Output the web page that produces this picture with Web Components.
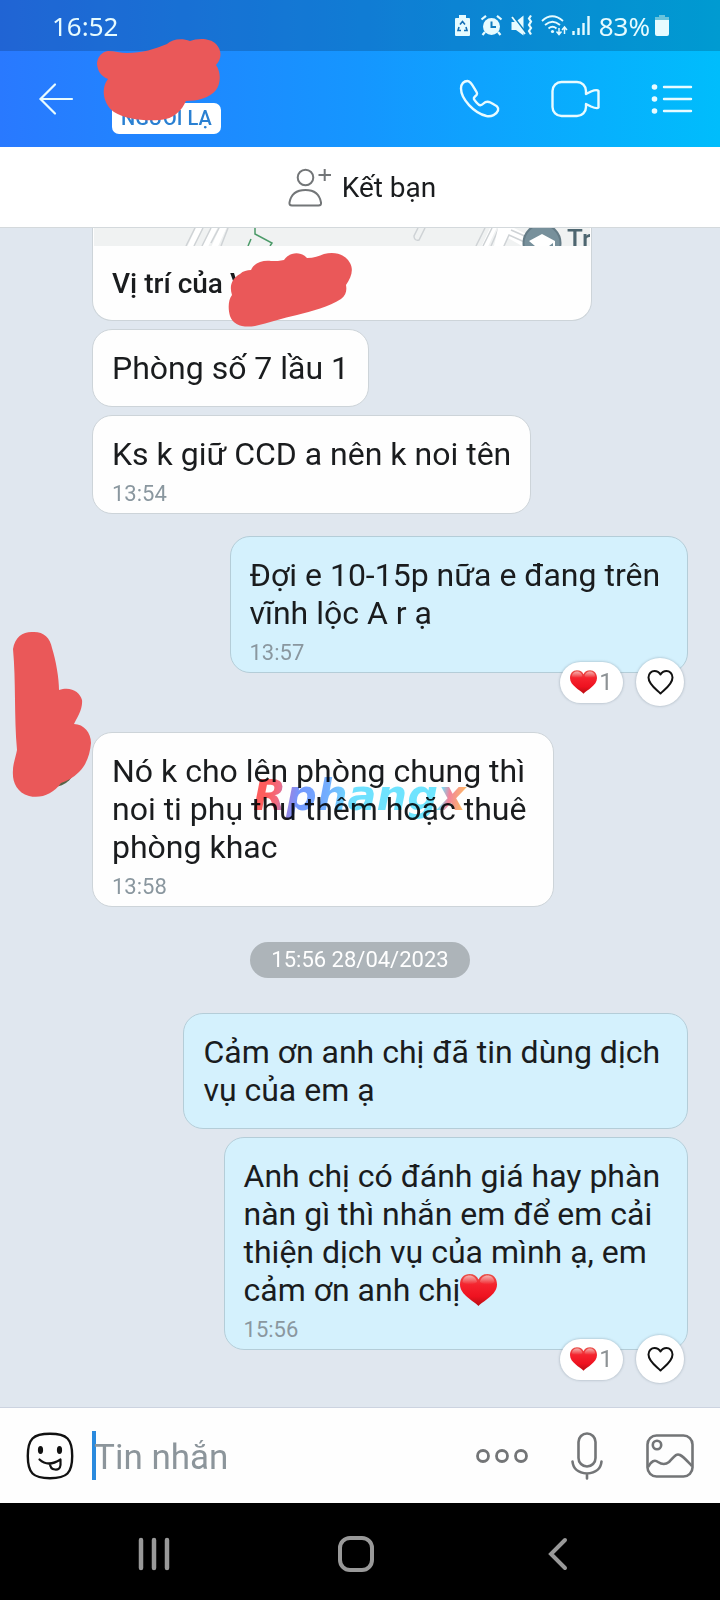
<!DOCTYPE html>
<html lang="vi">
<head>
<meta charset="utf-8">
<meta name="viewport" content="width=device-width, initial-scale=1">
<title>Tin nhắn</title>
<style>
  html, body { margin: 0; }
  body { font-family: Roboto, "Noto Sans", sans-serif; color: #1a1c1e; background: #000; }
</style>
</head>
<body>
<chat-screen></chat-screen>

<script>
const define = (tag, html) => {
  const template = document.createElement('template');
  template.innerHTML = html;
  customElements.define(tag, class extends HTMLElement {
    constructor() {
      super();
      this.attachShadow({ mode: 'open' }).append(template.content.cloneNode(true));
    }
  });
};

/* name: [width, height, markup] */
const ICONS = {
  recycle: [20, 24, '<path fill="currentColor" fill-rule="evenodd" d="M4 1h7v3h3q1 0 1 1v16q0 1-1 1H1q-1 0-1-1V5q0-1 1-1h3z"/><path d="M5 10.500l2.500-3 2.500 3M4 13l-1 3.500h3M11 13l1 3.500H9" fill="none" stroke="#146fb5" stroke-width="1.600"/>'],
  alarm: [25, 24, '<circle cx="11.500" cy="12.500" r="8.500" fill="currentColor"/><path d="M1.500 5.500L6 1.800M21.500 5.500L17 1.800M5 18l-2.500 3M18 18l2.500 3" stroke="currentColor" stroke-width="2.200"/><path d="M11.500 7.500v5.500h4.500" fill="none" stroke="#0e7cc0" stroke-width="2"/>'],
  mute: [26, 24, '<path fill="currentColor" d="M1.500 8h4l8-6.500v20L6 16H1.500z"/><path d="M3 2l13 17" stroke="#0d80bf" stroke-width="2"/><path d="M2 3l13 17" stroke="currentColor" stroke-width="1.800"/><path d="M21 1.500l-2 3 2 3-2 3.500 2 3-2 3 2 3.500" fill="none" stroke="currentColor" stroke-width="2.200"/>'],
  wifi: [26, 24, '<path d="M1 7q10-9.500 21 0M4 11q7.500-6.500 15 0M7.500 14.500q4-3.500 8 0" fill="none" stroke="currentColor" stroke-width="1.800"/><circle cx="11.500" cy="17.500" r="1.600" fill="currentColor"/><path d="M18 14v6M15.500 17.500l2.500 3 2.500-3M23.500 20v-6M21 16l2.500-3 2.500 3" fill="none" stroke="currentColor" stroke-width="1.500"/>'],
  signal: [22, 24, '<path d="M1.500 21v-4M6.500 21v-7M11.500 21v-12M16.500 21V2" stroke="currentColor" stroke-width="2.400"/>'],
  battery: [14, 24, '<path d="M4 1h6v2h4v4H0V3h4z" fill="#69c3dc"/><path d="M0 6h14v14q0 2-2 2H2q-2 0-2-2z" fill="currentColor"/>'],
  back: [36, 34, '<path d="M17 2.500L2.500 17 17 31.500M3 17h31" fill="none" stroke="currentColor" stroke-width="2.200" stroke-linecap="round"/>'],
  phone: [42, 40, '<path d="M2 9.500C2 4.500 5 2 8.500 2c3 0 5 4 7.500 8.500 2.500 4 3 4.500 0 7-2 1.700-1.500 2.500 1.500 6s4.500 3.500 7 1c2-2 4-2.500 7-1 6.500 3.500 8.500 4.500 7.500 8-1.500 4-6.500 6.500-11.500 5.500C15 34 2 20 2 9.500z" fill="none" stroke="currentColor" stroke-width="2.400"/>'],
  video: [50, 38, '<path d="M35 14V11a9 9 0 0 0-9-9H10.500a9 9 0 0 0-9 9v16a9 9 0 0 0 9 9H26a9 9 0 0 0 9-9v-3l5 2.500q6 2.500 7.500 1V11q-1.500-2-7.500.5z" fill="none" stroke="currentColor" stroke-width="2.400" stroke-linejoin="round"/>'],
  list: [42, 34, '<g fill="currentColor"><circle cx="3.500" cy="5" r="2.800"/><circle cx="3.500" cy="17" r="2.800"/><circle cx="3.500" cy="29" r="2.800"/></g><path d="M13 5h27M13 17h27M13 29h27" stroke="currentColor" stroke-width="2.400" stroke-linecap="round"/>'],
  addfriend: [44, 42, '<g fill="none" stroke="#737678" stroke-width="2"><circle cx="17.500" cy="10.500" r="7.800"/><path d="M1.500 35.500C3 27 8.500 23 17.500 23s14 4 15.500 12.500q.5 3-2.500 3H4q-3 0-2.500-3zM30.500 8h12.500M36.700 2v12"/></g>'],
  heart: [27, 26, '<path d="M13.500 24.500C9.500 20.500 1.500 15.500 1.500 8.500 1.500 4.500 4.500 2 7.500 2c3 0 4.500 1 6 3.500C15 3 16.500 2 19.500 2s6 2.500 6 6.500c0 7-8 12-12 16z" fill="none" stroke="currentColor" stroke-width="2" stroke-linejoin="round"/>'],
  emoji: [48, 48, '<path d="M24 1.800C41 1.800 46.200 7 46.200 24S41 46.200 24 46.200 1.800 41 1.800 24 7 1.800 24 1.800z" fill="none" stroke="currentColor" stroke-width="2.400"/><ellipse cx="14.500" cy="18" rx="2.600" ry="4" fill="currentColor"/><ellipse cx="33.500" cy="18" rx="2.600" ry="4" fill="currentColor"/><path d="M13.500 27.500q8.500 8 21 0M24 31.500q0 5.500 5 6 5 .5 5.500-4.500v-5" fill="none" stroke="currentColor" stroke-width="2.200" stroke-linecap="round"/>'],
  more: [52, 14, '<g fill="none" stroke="currentColor" stroke-width="2.800"><circle cx="7" cy="7" r="5.500"/><circle cx="26" cy="7" r="5.500"/><circle cx="45" cy="7" r="5.500"/></g>'],
  mic: [32, 48, '<g fill="none" stroke="currentColor" stroke-width="2.600" stroke-linecap="round"><rect x="7.500" y="1.500" width="17" height="33" rx="8.500"/><path d="M1.500 29.500q1 11 14.500 12 13.500-1 14.500-12M16 42v4.500"/></g>'],
  picture: [48, 46, '<g fill="none" stroke="currentColor" stroke-width="2.600"><rect x="1.500" y="2.500" width="45" height="41" rx="9"/><circle cx="11" cy="12" r="4.200"/><path d="M2 34q5-9 10-5 6 4 11 0c5-5 7-9 11-7 4 2 8 7 12 11"/></g>'],
  recents: [32, 34, '<path d="M3 3v28M16 3v28M29 3v28" stroke="currentColor" stroke-width="4.500" stroke-linecap="round"/>'],
  home: [36, 36, '<rect x="2" y="2" width="32" height="32" rx="10" fill="none" stroke="currentColor" stroke-width="4"/>'],
  prev: [20, 34, '<path d="M17 3L3 17l14 14" fill="none" stroke="currentColor" stroke-width="4" stroke-linecap="round"/>']
};
customElements.define('ui-icon', class extends HTMLElement {
  connectedCallback() {
    const [w, h, body] = ICONS[this.getAttribute('name')];
    if (!this.shadowRoot) this.attachShadow({ mode: 'open' });
    this.shadowRoot.innerHTML = `<style>:host{display:inline-flex;flex:none}svg{display:block;overflow:visible}</style>
      <svg width="${w}" height="${h}" viewBox="0 0 ${w} ${h}" aria-hidden="true">${body}</svg>`;
  }
});

define('red-heart', `
  <style>
    :host { display: inline-block; width: 27px; height: 24px; white-space: normal; }
    svg { display: block; width: 100%; height: 100%; }
  </style>
  <svg viewBox="0 0 37 32" role="img" aria-label="❤">
    <defs>
      <linearGradient id="g" x2="0" y2="1"><stop offset="0" stop-color="#e8544d"/><stop offset=".35" stop-color="#f5222d"/><stop offset=".7" stop-color="#ee1220"/><stop offset="1" stop-color="#b80d12"/></linearGradient>
      <linearGradient id="s" x2="0" y2="1"><stop offset="0" stop-color="#fff" stop-opacity=".55"/><stop offset="1" stop-color="#fff" stop-opacity="0"/></linearGradient>
    </defs>
    <path fill="url(#g)" d="M18.500 32C14 27 0 21 0 10.500 0 4 4 0 9.500 0c4.500 0 7.500 2 9 5.500C20 2 23 0 27.500 0 33 0 37 4 37 10.500 37 21 23 27 18.500 32z"/>
    <path fill="url(#s)" d="M2.500 8C3 3.500 6 1.500 9.500 1.500s7 2.500 7.500 6.500C13 11 6 11 2.500 8zM20 8c.5-4 4-6.500 7.500-6.500S34 3.500 34.500 8c-3.500 3-10.500 3-14.500 0z"/>
  </svg>`);

const SCRIBBLES = {
  name: [126, 82, 'M11 12C18 12 23 14 30 14 45 14 58 10 70 5 75 0 85-1 93 2 101-1 113-1 119 5 125 11 125 20 119 26 124 33 124 44 119 51 113 59 100 62 89 62 85 71 77 80 63 81 45 82 28 80 17 73 7 66 3 50 11 40 3 37 0 30 0 24 1 17 5 13 11 12z'],
  place: [124, 74, 'M22 17C25 10 33 7 42 8c5 0 9 0 13-1 5-8 17-9 23-2 7 0 12-2 17-4 12-3 22 1 26 9 4 7 1 15-4 22 1 6 0 10-5 14-12 8-29 12-44 16-14 3-29 8-42 11-12 2-22-1-25-10-2-7-2-16 2-21-3-9 0-17 8-21 3-3 7-4 11-4z'],
  avatar: [80, 168, 'M1 18C3 5 12 0 22 1c10 0 16 6 18 16 4 13 7 30 7 42 12-4 21 2 23 10 1 9-5 18-8 24 10 0 17 9 17 19-1 11-4 21-12 29-6 6-12 9-18 11-8 11-20 16-32 13C4 161 0 150 1 139c0-6 3-14 4-20C2 85 4 50 1 18z']
};
customElements.define('red-scribble', class extends HTMLElement {
  connectedCallback() {
    const [w, h, d] = SCRIBBLES[this.getAttribute('shape')];
    if (!this.shadowRoot) this.attachShadow({ mode: 'open' });
    this.shadowRoot.innerHTML = `<style>:host{display:block;pointer-events:none}svg{display:block;overflow:visible}</style>
      <svg width="${w}" height="${h}" viewBox="0 0 ${w} ${h}" aria-hidden="true"><path fill="#ea5859" d="${d}"/></svg>`;
  }
});

define('status-bar', `
  <style>
    :host { display: flex; align-items: center; gap: 5px; height: 51px; padding: 0 51px 0 52px;
      background: rgba(0,20,40,.2); color: #e6fbff; font: 26px/30px "Noto Sans", sans-serif; }
    .time { flex: 1; }
  </style>
  <span class="time">16:52</span>
  <ui-icon name="recycle"></ui-icon><ui-icon name="alarm"></ui-icon><ui-icon name="mute"></ui-icon>
  <ui-icon name="wifi"></ui-icon><ui-icon name="signal"></ui-icon>
  <span>83%</span>
  <ui-icon name="battery"></ui-icon>`);

define('chat-header', `
  <style>
    :host { display: flex; align-items: stretch; height: 96px; position: relative; color: #e8fbff; }
    button { display: flex; align-items: center; justify-content: center; width: 96px; padding: 0; border: 0; background: none; color: inherit; }
    .back { width: 112px; }
    .title { flex: 1; display: flex; align-items: flex-end; padding-bottom: 13px; }
    .badge { padding: 0 9px; border-radius: 7px; background: #fff; color: #2a80d2; font-size: 20px; line-height: 31px; font-weight: 500; }
    red-scribble { position: absolute; left: 97px; top: -12px; }
  </style>
  <button class="back" aria-label="Quay lại"><ui-icon name="back"></ui-icon></button>
  <div class="title"><span class="badge">NGƯỜI LẠ</span></div>
  <button aria-label="Gọi thoại"><ui-icon name="phone"></ui-icon></button>
  <button aria-label="Gọi video"><ui-icon name="video"></ui-icon></button>
  <button aria-label="Tùy chọn"><ui-icon name="list"></ui-icon></button>
  <red-scribble shape="name"></red-scribble>`);

define('friend-bar', `
  <style>
    :host { display: block; background: #fff; border-bottom: 1px solid #d4d9dc; }
    button { display: flex; align-items: center; justify-content: center; gap: 10px; box-sizing: border-box; width: 100%; height: 80px;
      padding: 1px 0 0 4px; border: 0; background: none; color: #1a1c1e; font: 28px/36px Roboto, sans-serif; }
  </style>
  <button><ui-icon name="addfriend"></ui-icon>Kết bạn</button>`);

define('location-card', `
  <style>
    :host { display: block; position: relative; width: 500px; max-width: 100%; box-sizing: border-box; background: #fefefe;
      border: solid #cdd4d9; border-width: 0 1px 1px; border-radius: 0 0 20px 20px; }
    .map { display: flex; height: 18px; margin: 0 1px; overflow: hidden; background: #f0f2f2; }
    .map svg { display: block; flex: none; }
    .map span { color: #4e6670; font: 500 26px/22px Roboto, sans-serif; padding-left: 5px; }
    .title { padding: 20px 19px 18px; font-size: 28px; line-height: 36px; font-weight: 500; }
    red-scribble { position: absolute; left: 136px; top: 25px; }
  </style>
  <div class="map">
    <svg width="468" height="18" viewBox="0 0 468 18" aria-hidden="true">
      <g fill="none" stroke="#fff" stroke-width="6"><path d="M96 20l10-22M110 20l11-22M120 20l10-22M390 20l12-26"/></g>
      <g fill="none" stroke="#cfd3d6" stroke-width="1.500"><path d="M92 18L101 0M100 18L109 0M108 18L117 0M117 15l8-15M127 18l7-18M382 18l9-18M389 18l9-18M397 18l8-18M324 0l-4 8q0 5 5 4l6-12"/></g>
      <path d="M404 0h16l16 8v10h-8l-14-8-5 8h-9z" fill="#fff"/><path d="M410 18l5-11 20 9M417 2l16 7" fill="none" stroke="#cfd3d6" stroke-width="1.500"/>
      <path d="M161 0v6l17 9-2 3M157 11l-3 7" fill="none" stroke="#4b9a68" stroke-width="1.500"/>
      <circle cx="448" cy="15" r="18.500" fill="#77909b" stroke="#647b86" stroke-width="2"/><path d="M435 13l13-7 13 7v5h-2v-3l-4 3h-14l-6-5z" fill="#fff"/>
    </svg>
    <span>Tr</span>
  </div>
  <div class="title">Vị trí của V</div>
  <red-scribble shape="place"></red-scribble>`);

define('chat-bubble', `
  <style>
    :host { display: block; position: relative; width: fit-content; max-width: 100%; box-sizing: border-box; padding: 19px;
      background: #fefefe; border: 1px solid #cdd4d9; border-radius: 20px; }
    :host([mine]) { align-self: flex-end; background: #d4f1fd; border-color: #b4cdd8; }
    :host([timed]) { padding-bottom: 6px; }
    .text { display: block; white-space: break-spaces; font-size: 32px; line-height: 38px; }
    slot[name=time] { display: none; margin-top: 8px; color: #8a979f; font-size: 22px; line-height: 26px; }
    :host([timed]) slot[name=time] { display: block; }
  </style>
  <span class="text"><slot></slot></span>
  <slot name="time"></slot>
  <slot name="extra"></slot>`);

define('chat-reactions', `
  <style>
    :host { display: flex; align-items: center; gap: 13px; position: absolute; right: 3px; bottom: -34px; white-space: normal; }
    button { display: flex; align-items: center; justify-content: center; box-sizing: border-box; padding: 0; border: 0;
      background: #fff; box-shadow: 0 0 2px 1px rgba(120,135,150,.3); font: 24px/26px Roboto, sans-serif; color: #8d9295; }
    .count { width: 63px; height: 41px; border-radius: 21px; gap: 2px; }
    .like { width: 48px; height: 48px; border-radius: 24px; color: #111; }
  </style>
  <button class="count"><red-heart></red-heart>1</button>
  <button class="like" aria-label="Thích"><ui-icon name="heart"></ui-icon></button>`);

define('date-chip', `
  <style>
    :host { display: block; padding: 0 21px; border-radius: 18px; background: #adb4b9; color: #fff; font-size: 22px; line-height: 36px; }
  </style><slot></slot>`);

define('brand-mark', `
  <style>
    :host { display: block; position: absolute; left: 161px; top: 37px; mix-blend-mode: multiply; opacity: .85; white-space: nowrap; pointer-events: none; }
    span { display: block; padding-right: 6px; font: italic bold 43px/52px "DejaVu Sans", sans-serif; color: transparent;
      background: linear-gradient(100deg, #ff4040 8%, #f0506c 13%, #8f6bd8 17%, #5a86ff 22%, #5aa0ff 34%, #55dcff 46%, #55e2ff 84%, #f0708c 88%, #ffae4a 95%);
      -webkit-background-clip: text; background-clip: text; }
  </style><span>Rphangx</span>`);

define('message-list', `
  <style>
    :host { display: flex; flex-direction: column; align-items: flex-start; gap: 8px; flex: 1; padding: 0 32px 56px 92px; background: #e0e7ef; }
    time { display: block; }
    .next { margin-top: 14px; }
    .after { margin-top: 51px; }
    .day { align-self: stretch; display: flex; justify-content: center; margin: 27px -32px 27px -92px; }
    .group { position: relative; max-width: 100%; }
    .avatar { position: absolute; left: -80px; top: -101px; }
    .photo { position: absolute; left: -62px; top: 9px; width: 46px; height: 46px; border-radius: 23px; background: #566447; }
    .big { width: 37px; height: 32px; vertical-align: -5px; }
  </style>
  <location-card></location-card>
  <chat-bubble>Phòng số 7 lầu 1</chat-bubble>
  <chat-bubble timed>Ks k giữ CCD a nên k noi tên<time slot="time">13:54</time></chat-bubble>
  <chat-bubble class="next" mine timed>Đợi e 10-15p nữa e đang trên 
vĩnh lộc A r ạ<time slot="time">13:57</time><chat-reactions slot="extra"></chat-reactions></chat-bubble>
  <div class="group after">
    <span class="photo"></span>
    <chat-bubble timed>Nó k cho lên phòng chung thì 
noi ti phụ thu thêm hoặc thuê 
phòng khac<time slot="time">13:58</time></chat-bubble>
    <red-scribble class="avatar" shape="avatar"></red-scribble>
    <brand-mark></brand-mark>
  </div>
  <div class="day"><date-chip>15:56 28/04/2023</date-chip></div>
  <chat-bubble mine>Cảm ơn anh chị đã tin dùng dịch 
vụ của em ạ</chat-bubble>
  <chat-bubble mine timed>Anh chị có đánh giá hay phàn 
nàn gì thì nhắn em để em cải 
thiện dịch vụ của mình ạ, em 
cảm ơn anh chị<red-heart class="big"></red-heart><time slot="time">15:56</time><chat-reactions slot="extra"></chat-reactions></chat-bubble>`);

define('message-composer', `
  <style>
    :host { display: flex; align-items: center; height: 95px; padding: 0 26px; background: #fefefe; border-top: 1px solid #ccd3e0; color: #737577; }
    button { display: flex; padding: 0; border: 0; background: none; color: inherit; }
    .emoji { color: #111; }
    label { flex: 1; min-width: 0; position: relative; margin: 0 18px; }
    label::before { content: ""; position: absolute; left: 0; top: 0; width: 4px; height: 49px; background: #2a8ade; }
    input { display: block; box-sizing: border-box; width: 100%; height: 49px; padding: 4px 0 0 2px; border: 0; outline: 0; background: none;
      position: relative; font: 35px/45px Roboto, sans-serif; color: #1a1c1e; }
    input::placeholder { color: #8c959b; opacity: 1; }
    .tools { display: flex; align-items: center; gap: 43px; }
  </style>
  <button class="emoji" aria-label="Biểu cảm"><ui-icon name="emoji"></ui-icon></button>
  <label><input type="text" placeholder="Tin nhắn" aria-label="Tin nhắn"></label>
  <div class="tools">
    <button aria-label="Thêm"><ui-icon name="more"></ui-icon></button>
    <button aria-label="Ghi âm"><ui-icon name="mic"></ui-icon></button>
    <button aria-label="Gửi ảnh"><ui-icon name="picture"></ui-icon></button>
  </div>`);

define('system-nav', `
  <style>
    :host { display: grid; grid-template-columns: repeat(3, 1fr); box-sizing: border-box; height: 97px; padding: 4px 61px 0 53px; background: #000; color: #999; }
    button { display: flex; align-items: center; justify-content: center; padding: 0; border: 0; background: none; color: inherit; }
  </style>
  <button aria-label="Gần đây"><ui-icon name="recents"></ui-icon></button>
  <button aria-label="Trang chính"><ui-icon name="home"></ui-icon></button>
  <button aria-label="Trở về"><ui-icon name="prev"></ui-icon></button>`);

define('chat-screen', `
  <style>
    :host { display: flex; flex-direction: column; min-height: 100vh; }
    header { background: linear-gradient(90deg, #2979ff, #1596ff 50%, #00bdfc); position: relative; }
  </style>
  <header><status-bar></status-bar><chat-header></chat-header></header>
  <friend-bar></friend-bar>
  <message-list></message-list>
  <message-composer></message-composer>
  <system-nav></system-nav>`);
</script>
</body>
</html>
